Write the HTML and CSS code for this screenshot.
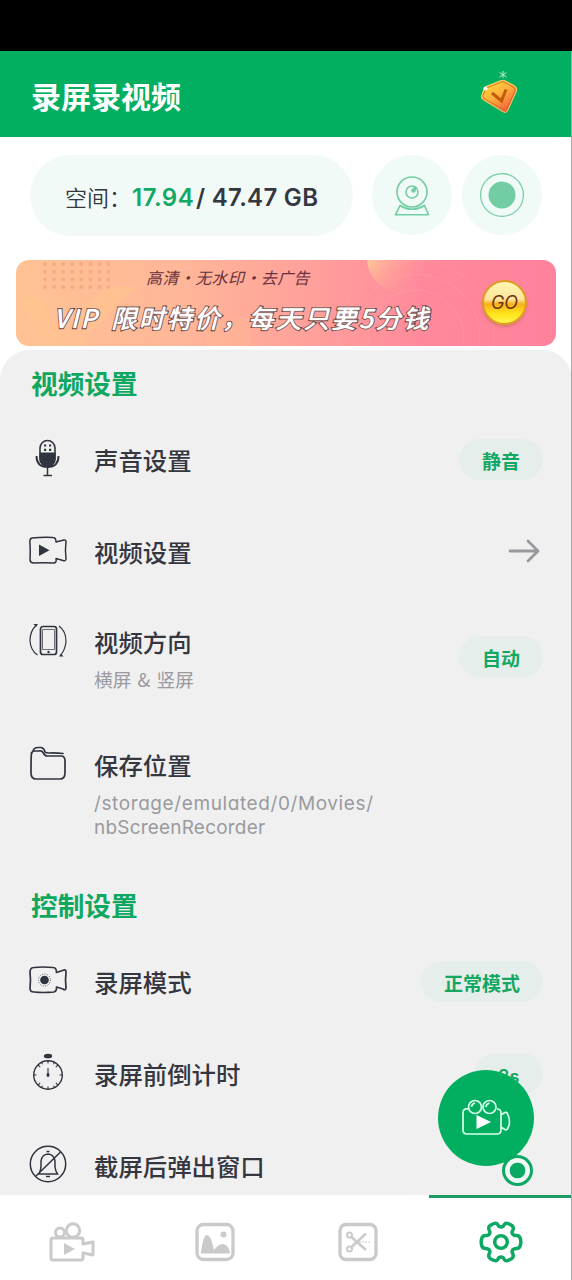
FILE: index.html
```html
<!DOCTYPE html>
<html lang="zh-CN">
<head>
<meta charset="utf-8">
<title>录屏录视频</title>
<link rel="stylesheet" href="styles.css">
</head>
<body>
<div class="app">
  <div class="status"></div>
  <header class="header">
    <h1 class="title">录屏录视频</h1>
    <svg class="gem" viewBox="0 0 44 46" width="44" height="46">
      <defs><linearGradient id="gem" x1="0" y1="0" x2=".75" y2="1"><stop offset="0" stop-color="#ffe03a"/><stop offset=".5" stop-color="#ffb33d"/><stop offset="1" stop-color="#f2573f"/></linearGradient></defs>
      <path d="M8 15.500L23 9.500Q25 9 27 9.800L37 15Q39.500 17 38.500 20L29.500 40Q28 42.500 25.500 41L5.500 29Q3 27.500 3.500 25L6 18Q6.500 16 8 15.500Z" fill="url(#gem)" stroke="#f7cd6c"/>
      <path d="M8.500 17L23.500 11Q25 10.500 27 11.500L36 16.500Q37.500 18 37 20L28.500 38.500Q27.500 40 26 39L6 27.500Q4.500 26 5 24.500Z" fill="none" stroke="#c3641f" stroke-width=".8"/>
      <path d="M14 22L23.500 30L28 18.500" fill="none" stroke="#bd5d0b" stroke-width="3"/>
      <path d="M25 0V7M21.500 1.500L28.500 6M28.500 1.500L21.500 6" stroke="#b4edc9" stroke-width="1"/>
      <circle cx="7.500" cy="17.500" r="2" fill="#fff"/>
    </svg>
  </header>

  <section class="tools">
    <div class="space"><span class="space-label">空间：</span><span class="space-used">17.94</span><span class="space-total">/ 47.47 GB</span></div>
    <div class="round cam">
      <svg viewBox="0 0 36 42" width="36" height="42" fill="none" stroke="#72cda2" stroke-width="1.600">
        <circle cx="18" cy="17" r="15"/><circle cx="18" cy="17" r="6"/><circle cx="19.500" cy="15.500" r="2.200" fill="#72cda2" stroke="none"/><path d="M19 13l3-2v5z" fill="#72cda2" stroke="none"/>
        <path d="M6 30.500L1.500 39.800H34.500L30.500 30.500Q18 38 6 30.500Z" stroke-linejoin="round"/>
      </svg>
    </div>
    <div class="round">
      <svg viewBox="0 0 46 46" width="46" height="46"><circle cx="23" cy="23" r="21.400" fill="none" stroke="#72cda2" stroke-width="1.200"/><circle cx="23" cy="23" r="13.500" fill="#72cda2"/></svg>
    </div>
  </section>

  <section class="banner">
    <svg class="banner-art" viewBox="0 0 540 86" width="540" height="86">
      <defs>
        <pattern id="dots" x="26" y="1" width="9.100" height="7.700" patternUnits="userSpaceOnUse"><circle cx="3" cy="3" r="2" fill="#f2a27c" opacity=".75"/></pattern>
        <linearGradient id="sun" x1="0" y1="0" x2="1" y2=".35"><stop offset="0" stop-color="#ffc797"/><stop offset=".8" stop-color="#ff8f9b" stop-opacity="0"/></linearGradient>
        <linearGradient id="vee" x1="0" y1="0" x2="0" y2="1"><stop offset="0" stop-color="#ffcc83"/><stop offset="1" stop-color="#ffcc83" stop-opacity=".3"/></linearGradient>
      </defs>
      <path d="M4 38H24L42 72L92 27H120L62 86H28Z" fill="url(#vee)" opacity=".38"/>
      <path d="M190 86V72Q210 52 235 60V86Z" fill="#ffc08f" opacity=".25"/>
      <rect x="26" y="1" width="68" height="29" fill="url(#dots)"/>
      <path d="M351 0C352 20 371 38 404 34L430 0Z" fill="url(#sun)"/>
      <g fill="none" stroke="#ffacb5" opacity=".28"><circle cx="400" cy="78" r="48"/><circle cx="400" cy="78" r="64"/><circle cx="400" cy="78" r="78"/></g>
    </svg>
    <div class="banner-copy">
      <div class="banner-top">高清·无水印·去广告</div>
      <div class="banner-main"><span class="vip">VIP</span><span class="deal">限时特价，</span><span class="daily">每天只要5分钱</span></div>
    </div>
    <div class="go">GO</div>
  </section>

  <main class="panel">
    <h2 class="section">视频设置</h2>
    <div class="row">
      <svg class="icon" viewBox="0 0 38 38" width="38" height="38" fill="none" stroke="#30343f">
        <rect x="11" y="1.500" width="15" height="26" rx="7.500" stroke-width="1.600"/><path d="M11 14H26V20a7.500 7.500 0 0 1-15 0Z" fill="#30343f"/>
        <path d="M15 6.500h2.200M20 6.500h2.200M15 10.800h2.200M20 10.800h2.200" stroke-width="2.200"/><path d="M7.500 17c0 8 4.500 11 11 11s11-3 11-11" stroke-width="1.900"/><path d="M18.500 28v8M14.500 36.600h8.500" stroke-width="1.500"/>
      </svg>
      <div class="copy"><div class="label">声音设置</div></div><div class="pill">静音</div>
    </div>
    <div class="row">
      <svg class="icon" viewBox="0 0 38 38" width="38" height="38" fill="none" stroke="#30343f" stroke-width="1.500" stroke-linejoin="round">
        <path d="M3 7Q14 6 24 6.500Q27 6.500 27 11L35 9Q37 8.500 37 11Q35.800 19.500 37 27.500Q37 30.500 34 29.500L27 27.500Q28 31.500 25 32Q14 31.500 4 32Q1 31.500 1 28.500Q1.500 17.500 .800 10.500Q1 7.500 3 7Z"/><path d="M10 13.500L20.500 19.300L10 25Z" fill="#30343f" stroke="none"/>
      </svg>
      <div class="copy"><div class="label">视频设置</div></div>
      <svg class="arrow" viewBox="0 0 32 26" width="32" height="26" fill="none" stroke="#98999d" stroke-width="2.800" stroke-linecap="round" stroke-linejoin="round"><path d="M2 13H30M20 3L30 13L20 23"/></svg>
    </div>
    <div class="row row-two">
      <svg class="icon" viewBox="0 0 38 38" width="38" height="38" fill="none" stroke="#30343f">
        <rect x="11.500" y="5.500" width="16" height="28" rx="2.500" stroke-width="1.700"/><path d="M13.500 8.500H25.500V28.500H13.500Z" stroke-width=".7"/><circle cx="19.500" cy="31" r="1.200" fill="#30343f" stroke="none"/>
        <path d="M7.500 4Q1 10 1 19.500Q1.500 29.500 8.500 34M30 5Q37 10 37 20.500Q36.500 28 31.500 34.500" stroke-width="1.200"/><path d="M4.500 3H9L7 6ZM34.500 35.500H30L32 32.500Z" fill="#30343f" stroke="none"/>
      </svg>
      <div class="copy"><div class="label">视频方向</div><div class="sub">横屏 &amp; 竖屏</div></div><div class="pill pill-mid">自动</div>
    </div>
    <div class="row row-path">
      <svg class="icon" viewBox="0 0 38 38" width="38" height="38" fill="none" stroke="#30343f" stroke-width="1.700" stroke-linecap="round" stroke-linejoin="round">
        <path d="M2.500 7.500Q2 12 2 28Q2 34 7 34H31Q36 34 36 28V16Q36 11 32 11H18Q16 11 14 7.500Q13 5.500 10 6H6Q2.500 6 2.500 9M4 6Q5 2.500 9 2.500H12Q15 3 16 7Q17 8 20 8Q28 7.800 34 8.500"/>
      </svg>
      <div class="copy"><div class="label">保存位置</div><div class="sub path"><span class="path-dir">/storage/emulated/0/Movies/</span><br>nbScreenRecorder</div></div>
    </div>
    <h2 class="section section-next">控制设置</h2>
    <div class="row">
      <svg class="icon" viewBox="0 0 38 38" width="38" height="38" fill="none" stroke="#30343f" stroke-width="1.700" stroke-linejoin="round">
        <path d="M5 6.500Q14 5.500 24 6.500Q27.500 6.500 27.500 11.500L35 9Q37 8.500 37 11.500Q36 19 37 26.500Q37 30 34 28L27.500 26Q28 30 25 31Q14 32 5 31Q1 31 1 27Q2 19 1 11.500Q1 6.500 5 6.500Z"/><circle cx="15.500" cy="19" r="3.500" fill="#30343f"/><circle cx="15.500" cy="19" r="6" stroke-width=".8" stroke-dasharray="1 1.500"/>
      </svg>
      <div class="copy"><div class="label">录屏模式</div></div><div class="pill">正常模式</div>
    </div>
    <div class="row">
      <svg class="icon" viewBox="0 0 38 38" width="38" height="38" fill="none" stroke="#30343f" stroke-width="1.400">
        <circle cx="19" cy="22" r="14.300"/><ellipse cx="19" cy="3" rx="3.500" ry="1.600" fill="#30343f"/><ellipse cx="19" cy="22" rx="1.500" ry="2" fill="#30343f" stroke="none"/><path d="M19 15V22M19 8v2.500M19 33.500v2.500M5 22h2.500M30.500 22h2.500M9.200 12.200l2 2M26.800 29.800l2 2M9.200 31.800l2-2M26.800 14.200l2-2M12.500 9.500l1 1.800M25.500 9.500l-1 1.800M12.500 34.500l1-1.800M25.500 34.500l-1-1.800" stroke-width="1.100"/>
      </svg>
      <div class="copy"><div class="label">录屏前倒计时</div></div><div class="pill pill-time">3s</div>
    </div>
    <div class="row">
      <svg class="icon" viewBox="0 0 38 38" width="38" height="38" fill="none" stroke="#30343f" stroke-width="1.500">
        <circle cx="19" cy="19" r="17.700"/><path d="M9.500 29Q12 26 12 20V16Q13 9.500 19 9Q25 9.500 26 16V22Q26.500 26 28.500 29ZM7 31L31.500 7"/><path d="M17.500 6.500H20.500M17 31.500H21"/>
      </svg>
      <div class="copy"><div class="label">截屏后弹出窗口</div></div>
    </div>
  </main>

  <nav class="nav">
    <div class="tab"><svg viewBox="0 0 46 40" width="46" height="40" fill="none" stroke="#c9cacb" stroke-width="3" stroke-linejoin="round"><circle cx="11" cy="10.500" r="4.500"/><circle cx="24" cy="8.500" r="6.700"/><path d="M4 16H32Q34 16 34 18V22L44 20V33L34 31V36Q34 38 32 38H4Q2 38 2 36V18Q2 16 4 16Z"/><path d="M15 21V33L26 27Z" fill="#c9cacb" stroke="none"/></svg></div>
    <div class="tab"><svg viewBox="0 0 40 40" width="40" height="40" fill="none" stroke="#c9cacb" stroke-width="3.300"><rect x="2" y="2.500" width="36" height="35" rx="6.500"/><g fill="#c9cacb" stroke="none"><circle cx="28.500" cy="12.500" r="3"/><path d="M6 31.500C7 21 9 13 12 13Q16 13 19 28Q23 22 28 22Q34 23 35 31.500Z"/></g></svg></div>
    <div class="tab"><svg viewBox="0 0 40 40" width="40" height="40" fill="none" stroke="#c9cacb"><rect x="2" y="2.500" width="36" height="35" rx="6" stroke-width="3.300"/><g stroke-width="2"><circle cx="11.500" cy="13" r="2.500"/><circle cx="11.500" cy="27" r="2.500"/><path d="M13.500 15L28 28M13.500 25L28 11.500" stroke-width="2.500"/><path d="M21 20H32" stroke-width="1" stroke-dasharray="2 1"/></g></svg></div>
    <div class="tab active"><svg viewBox="0 0 44 42" width="44" height="42" fill="none" stroke="#0da862" stroke-width="3.500" stroke-linejoin="round"><path d="M22 6Q24 6 25.200 3.700Q26.500 1.500 29 2.500L32.500 4.300Q35 5.800 34 8.800Q32.500 11.300 33.500 12.800Q34.500 14.500 37.500 14.500Q40.500 14.500 41.300 17.500Q42.300 21 41.300 24.500Q40.500 27.500 37.500 27.500Q34.500 27.500 33.500 29.200Q32.500 30.700 34 33.200Q35 36.200 32.500 37.700L29 39.500Q26.500 40.500 25.200 38.300Q24 36 22 36Q20 36 18.800 38.300Q17.500 40.500 15 39.500L11.500 37.700Q9 36.200 10 33.200Q11.500 30.700 10.500 29.200Q9.500 27.500 6.500 27.500Q3.500 27.500 2.700 24.500Q1.700 21 2.700 17.500Q3.500 14.500 6.500 14.500Q9.500 14.500 10.500 12.800Q11.500 11.300 10 8.800Q9 5.800 11.500 4.300L15 2.500Q17.500 1.500 18.800 3.700Q20 6 22 6Z"/><circle cx="22" cy="21" r="6.300"/></svg></div>
  </nav>

  <div class="fab">
    <svg viewBox="0 0 50 38" width="50" height="38" fill="none" stroke="#d8ffea" stroke-width="1.700" stroke-linejoin="round"><circle cx="14" cy="8" r="6.500"/><circle cx="28.500" cy="8" r="6.500"/><path d="M10.500 8q0-3 3.500-4M25 8q0-3 3.500-4"/><path d="M7 10Q2 9 2 14V31Q2 35 6 35H36Q40 35 40 31V14Q40 10 36 10M40 16L43 14Q46 12 47 16Q50 23 47 29Q46 32 43 30L40 28"/><path d="M15.500 16V30L30 23Z" fill="#fff" stroke="none"/></svg>
  </div>
  <div class="radio"></div>
  <div class="edge"></div>
</div>
</body>
</html>
```

FILE: styles.css
```css
* { box-sizing: border-box; }
body { margin: 0; background: #fff; font-family: "Noto Sans CJK SC", "Noto Sans", sans-serif; color: #343640; }
.app { position: relative; display: flex; flex-direction: column; width: 572px; height: 1280px; overflow: hidden; }
.status { height: 51px; background: #000; }
.header { display: flex; align-items: center; justify-content: space-between; height: 86px; padding: 0 50px 0 31px; background: #02ae5f; }
.title { margin: 2px 0 0; color: #fff; font-size: 30px; line-height: 40px; font-weight: 700; }
.gem { margin-bottom: 0; }

.tools { display: flex; gap: 10px; padding: 18px 30px 0; height: 123px; }
.space { display: flex; align-items: center; width: 323px; height: 81px; margin-right: 9px; padding: 4px 0 0 35px; border-radius: 41px; background: #f2faf7; white-space: nowrap; }
.space-label { width: 67px; margin-top: -4px; font-size: 22px; font-weight: 350; }
.space-used, .space-total { font-family: Inter, sans-serif; font-size: 24px; font-weight: 600; }
.space-used { width: 64px; color: #12a866; letter-spacing: .5px; }
.space-total { letter-spacing: .3px; }
.round { display: flex; align-items: center; justify-content: center; width: 80px; height: 80px; border-radius: 50%; background: #f0faf6; }
.cam { padding-top: 1px; }

.banner { position: relative; display: flex; justify-content: space-between; height: 86px; margin: 0 16px; overflow: hidden; border-radius: 13px; background: linear-gradient(90deg, #ffc294 0%, #ffb798 30%, #ffa09b 55%, #ff899c 76%, #ff829c 100%); }
.banner-art { position: absolute; inset: 0; }
.banner-copy { position: relative; padding-left: 38px; font-style: italic; white-space: nowrap; }
.banner-top { padding: 4px 0 0 92px; color: #68313d; font-size: 16px; line-height: 26px; letter-spacing: .4px; }
.banner-main { display: flex; margin-top: 7px; color: #fff; font-size: 25.500px; line-height: 40px; font-weight: 400; letter-spacing: 2.200px; -webkit-text-stroke: 2.400px #5c332f; paint-order: stroke fill; text-shadow: 0 0 1px #fff, 0 0 2px #fff; }
.vip { width: 57px; letter-spacing: 2.200px; }
.deal { width: 137px; }
.go { position: relative; width: 45px; height: 45px; margin: 20px 29px 0 0; border: 2px solid #df9c24; border-radius: 50%; background: linear-gradient(#fff7b2 0%, #ffe59b 42%, #f8b01b 54%, #ffe61b 78%, #fff44b 100%); box-shadow: 0 2px 3px #b96b4e88; color: #6d3515; font: italic 18px/41px Inter, sans-serif; text-align: center; }

.panel { height: 845px; margin-top: 4px; overflow: hidden; background: #f0f0f0; border-radius: 30px 30px 0 0; }
.section { height: 65px; margin: 0; padding: 13px 0 0 31px; font-size: 26.700px; line-height: 40px; font-weight: 700; color: #10a861; }
.section-next { height: 71px; padding-top: 19px; }
.row { display: flex; align-items: flex-start; height: 92px; padding: 24px 29px 0 29px; }
.row-two { height: 123px; padding-top: 22px; }
.row-path { height: 144px; padding-top: 23px; }
.icon { flex: none; width: 38px; height: 38px; }
.copy { margin-left: 27px; }
.label { font-size: 24.400px; line-height: 42px; font-weight: 500; white-space: nowrap; }
.sub { margin-top: 1px; color: #9a9a9f; font-size: 18.700px; line-height: 30px; white-space: nowrap; word-spacing: 2px; }
.row-path .label { margin-top: -1px; }
.path { margin-top: 6px; font-family: Inter, sans-serif; font-size: 19px; line-height: 24px; letter-spacing: .2px; font-feature-settings: "cv11"; }
.path-dir { letter-spacing: .6px; }
.pill { height: 41px; margin-left: auto; padding: 0 23px; border-radius: 21px; background: #e5eeea; color: #13a761; font-size: 19px; line-height: 44px; font-weight: 700; }
.pill-mid { margin-top: 15px; }
.pill-time { width: 68px; font-family: Inter, sans-serif; font-size: 18px; line-height: 47px; font-weight: 600; }
.arrow { margin: 7px 3px 0 auto; }

.nav { display: flex; height: 85px; background: #fff; }
.tab { display: flex; flex: 1; align-items: center; justify-content: center; padding: 8px 0 0; }
.active { border-top: 3px solid #1c9d65; padding-top: 5px; }
.fab { position: absolute; left: 438px; top: 1070px; display: flex; align-items: center; justify-content: center; width: 96px; height: 96px; border-radius: 50%; background: #02ae5f; }
.radio { position: absolute; left: 502px; top: 1155px; width: 31px; height: 31px; border: 3px solid #0ca965; border-radius: 50%; background: radial-gradient(circle, #0ca965 0 7.500px, #f1faf5 8.200px); }
.edge { position: absolute; top: 51px; right: 0; width: 1px; height: 1229px; background: #aaa; }
```
